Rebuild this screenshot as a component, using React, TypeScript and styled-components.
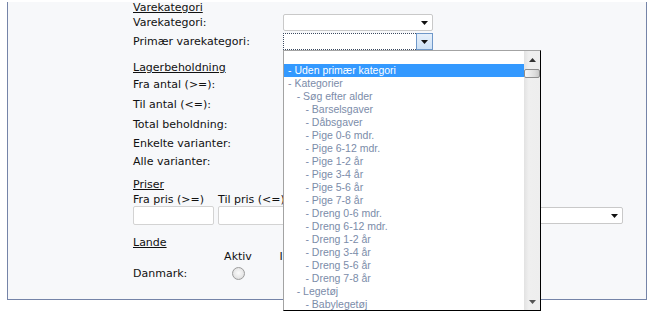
import { createGlobalStyle } from "styled-components";
import styled from "styled-components";

const GlobalStyle = createGlobalStyle`
  html, body {
    margin: 0;
    padding: 0;
    background: #ffffff;
  }
  body {
    font-family: "DejaVu Sans", Verdana, sans-serif;
    font-size: 11px;
    color: #111111;
  }
`;

const Page = styled.div`
  padding-left: 7px;
  min-height: 314px;
`;

const Panel = styled.section`
  width: 640px;
  box-sizing: border-box;
  background: #f7f8fa;
  border: 1px solid #7584a8;
  border-top: none;
  padding: 0 0 16px 125px;
`;

const SectionTitle = styled.div<{ $top: number }>`
  margin-top: ${(p) => p.$top}px;
  height: 12px;
  line-height: 12px;
  text-decoration: underline;
  text-underline-offset: 1px;
`;

const FieldRow = styled.div<{ $h: number; $top?: number }>`
  display: flex;
  align-items: center;
  height: ${(p) => p.$h}px;
  margin-top: ${(p) => p.$top ?? 0}px;
`;

const Label = styled.label`
  width: 150px;
  flex: none;
  line-height: 13px;
  white-space: nowrap;
`;

const SelectBox = styled.div<{ $width: number }>`
  position: relative;
  box-sizing: border-box;
  width: ${(p) => p.$width}px;
  height: 17px;
  background: #ffffff;
  border: 1px solid #c9c9c9;
  border-radius: 2px;
  display: flex;
  align-items: center;
  justify-content: flex-end;
  padding-right: 4px;
`;

const FocusSelect = styled.div`
  position: relative;
  box-sizing: border-box;
  width: 150px;
  height: 17px;
  display: flex;
  background: #ffffff;
`;

const FocusField = styled.div`
  flex: 1;
  border: 1px dotted #3c4a60;
  border-right: none;
`;

const ArrowButton = styled.div`
  box-sizing: border-box;
  width: 17px;
  border: 1px solid #6f98c9;
  background: linear-gradient(#e6f0fb, #cfe2f6);
  display: flex;
  align-items: center;
  justify-content: center;
`;

const TextInput = styled.input<{ $width: number }>`
  box-sizing: border-box;
  width: ${(p) => p.$width}px;
  height: 19px;
  margin: 0;
  padding: 0 2px;
  border: 1px solid #d3d3d3;
  border-radius: 2px;
  background: #ffffff;
  outline: none;
`;

const PriceRow = styled.div`
  display: flex;
  gap: 4px;
  margin-top: 2px;
`;

const PriceCol = styled.div`
  display: flex;
  flex-direction: column;
`;

const PriceLabel = styled.div`
  height: 13px;
  line-height: 13px;
  white-space: nowrap;
`;

const ControlSlot = styled.div`
  height: 19px;
  display: flex;
  align-items: center;
`;

const CountryGrid = styled.div`
  display: grid;
  grid-template-columns: 75px 60px 60px;
  grid-template-rows: 13px 20px;
  margin-top: 1px;
  align-items: center;
`;

const ColHead = styled.div`
  text-align: center;
  line-height: 13px;
`;

const CountryName = styled.div`
  line-height: 13px;
`;

const RadioCell = styled.div`
  display: flex;
  justify-content: center;
  padding-top: 1px;
`;

const Radio = styled.input`
  appearance: none;
  margin: 0;
  width: 13px;
  height: 13px;
  border-radius: 50%;
  border: 1px solid #9c9c9c;
  background: radial-gradient(circle at 50% 45%, #fbfbfb 0, #e8e8e8 55%, #cfcfcf 100%);
  box-sizing: border-box;
`;

const DropList = styled.div`
  position: absolute;
  top: 17px;
  left: 0;
  z-index: 10;
  box-sizing: border-box;
  width: 258px;
  height: 261px;
  background: #ffffff;
  border-top: 1px solid #a3a3a3;
  border-left: 1px solid #a3a3a3;
  border-right: 1px solid #000000;
  border-bottom: 1px solid #000000;
  display: flex;
  overflow: hidden;
`;

const Options = styled.ul`
  flex: 1;
  margin: 0;
  padding: 0;
  list-style: none;
  overflow: hidden;
`;

const Option = styled.li<{ $level: number; $selected?: boolean }>`
  height: 13px;
  line-height: 13px;
  font-family: "Liberation Sans", Arial, sans-serif;
  font-size: 10.5px;
  white-space: nowrap;
  padding-left: ${(p) => 4 + p.$level * 8.7}px;
  color: ${(p) => (p.$selected ? "#ffffff" : "#7b8ca9")};
  background: ${(p) => (p.$selected ? "#3399ff" : "transparent")};
`;

const Scrollbar = styled.div`
  width: 16px;
  flex: none;
  position: relative;
  background: linear-gradient(to right, #e2e2e2, #efefef 30%, #eeeeee);
`;

const ScrollArrow = styled.div<{ $down?: boolean }>`
  position: absolute;
  left: 0;
  width: 16px;
  height: 16px;
  display: flex;
  align-items: center;
  justify-content: center;
  ${(p) => (p.$down ? "bottom: 0;" : "top: 1px;")}
`;

const Thumb = styled.div`
  position: absolute;
  top: 18px;
  left: 0;
  width: 16px;
  height: 9px;
  box-sizing: border-box;
  border: 1px solid #8e8e8e;
  border-radius: 2px;
  background: linear-gradient(to right, #f7f7f7, #dcdcdc 70%, #c9c9c9);
`;

const Caret = ({ up = false, color = "#111" }: { up?: boolean; color?: string }) => (
  <svg width="7" height="4" viewBox="0 0 7 4">
    <path d={up ? "M0 4h7L3.5 0z" : "M0 0h7L3.5 4z"} fill={color} />
  </svg>
);

const options: { text: string; level: number; selected?: boolean }[] = [
  { text: "", level: 0 },
  { text: "- Uden primær kategori", level: 0, selected: true },
  { text: "- Kategorier", level: 0 },
  { text: "- Søg efter alder", level: 1 },
  { text: "- Barselsgaver", level: 2 },
  { text: "- Dåbsgaver", level: 2 },
  { text: "- Pige 0-6 mdr.", level: 2 },
  { text: "- Pige 6-12 mdr.", level: 2 },
  { text: "- Pige 1-2 år", level: 2 },
  { text: "- Pige 3-4 år", level: 2 },
  { text: "- Pige 5-6 år", level: 2 },
  { text: "- Pige 7-8 år", level: 2 },
  { text: "- Dreng 0-6 mdr.", level: 2 },
  { text: "- Dreng 6-12 mdr.", level: 2 },
  { text: "- Dreng 1-2 år", level: 2 },
  { text: "- Dreng 3-4 år", level: 2 },
  { text: "- Dreng 5-6 år", level: 2 },
  { text: "- Dreng 7-8 år", level: 2 },
  { text: "- Legetøj", level: 1 },
  { text: "- Babylegetøj", level: 2 },
];

const stockRows: { label: string; h: number; input?: boolean }[] = [
  { label: "Fra antal (>=):", h: 20, input: true },
  { label: "Til antal (<=):", h: 20, input: true },
  { label: "Total beholdning:", h: 20 },
  { label: "Enkelte varianter:", h: 18 },
  { label: "Alle varianter:", h: 18 },
];

export default function App() {
  return (
    <Page>
      <GlobalStyle />
      <Panel>
        <SectionTitle $top={2}>Varekategori</SectionTitle>
        <FieldRow $h={17}>
          <Label>Varekategori:</Label>
          <SelectBox $width={150}>
            <Caret />
          </SelectBox>
        </FieldRow>
        <FieldRow $h={17} $top={2}>
          <Label>Primær varekategori:</Label>
          <FocusSelect>
            <FocusField />
            <ArrowButton>
              <Caret />
            </ArrowButton>
            <DropList>
              <Options>
                {options.map((o, i) => (
                  <Option key={i} $level={o.level} $selected={o.selected}>
                    {o.text}
                  </Option>
                ))}
              </Options>
              <Scrollbar>
                <ScrollArrow>
                  <Caret up color="#333" />
                </ScrollArrow>
                <Thumb />
                <ScrollArrow $down>
                  <Caret color="#555" />
                </ScrollArrow>
              </Scrollbar>
            </DropList>
          </FocusSelect>
        </FieldRow>

        <SectionTitle $top={12}>Lagerbeholdning</SectionTitle>
        {stockRows.map((r) => (
          <FieldRow key={r.label} $h={r.h}>
            <Label>{r.label}</Label>
            {r.input ? <TextInput $width={150} /> : null}
          </FieldRow>
        ))}

        <SectionTitle $top={9}>Priser</SectionTitle>
        <PriceRow>
          <PriceCol>
            <PriceLabel>Fra pris (&gt;=)</PriceLabel>
            <ControlSlot>
              <TextInput $width={81} />
            </ControlSlot>
          </PriceCol>
          <PriceCol>
            <PriceLabel>Til pris (&lt;=)</PriceLabel>
            <ControlSlot>
              <TextInput $width={81} />
            </ControlSlot>
          </PriceCol>
          <PriceCol>
            <PriceLabel>&nbsp;</PriceLabel>
            <ControlSlot>
              <SelectBox $width={320}>
                <Caret />
              </SelectBox>
            </ControlSlot>
          </PriceCol>
        </PriceRow>

        <SectionTitle $top={12}>Lande</SectionTitle>
        <CountryGrid>
          <div />
          <ColHead>Aktiv</ColHead>
          <ColHead>Inaktiv</ColHead>
          <CountryName>Danmark:</CountryName>
          <RadioCell>
            <Radio type="radio" name="dk" />
          </RadioCell>
          <RadioCell>
            <Radio type="radio" name="dk" />
          </RadioCell>
        </CountryGrid>
      </Panel>
    </Page>
  );
}
